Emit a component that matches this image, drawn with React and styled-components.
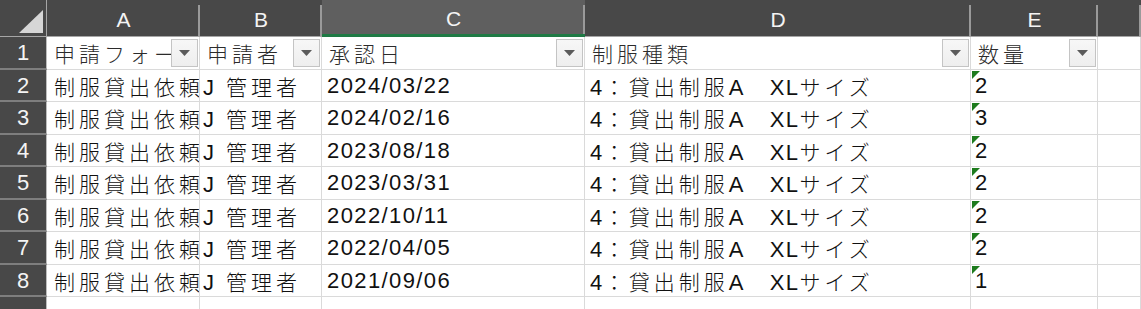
import React from 'react'
import styled, { createGlobalStyle } from 'styled-components'

const GlobalStyle = createGlobalStyle`
  body {
    margin: 0;
    background: #ffffff;
    font-family: "Liberation Sans", "Noto Sans CJK JP", sans-serif;
  }
`

const Sheet = styled.div`
  width: 1141px;
  height: 309px;
  overflow: hidden;
  display: grid;
  grid-template-columns: 47px 153px 122px 263px 386px 127px 1fr;
  grid-template-rows: 37px 33px 32px 33px 32px 33px 32px 33px 32px 40px;
  background: #ffffff;
`

const Corner = styled.div`
  background: #484848;
  border-right: 1px solid #a6a6a6;
  border-bottom: 1px solid #a6a6a6;
  display: flex;
  align-items: flex-end;
  justify-content: flex-end;
  padding: 0 3px 3px 0;
`

const ColHead = styled.div`
  background: ${p => (p.$selected ? '#5f5f5f' : '#484848')};
  border-bottom: ${p => (p.$selected ? '3px solid #1f7a45' : '1px solid #a6a6a6')};
  color: #f4f4f4;
  font-size: 21px;
  display: flex;
  align-items: center;
  justify-content: center;
  padding-top: 4px;
  background-image: linear-gradient(#9a9a9a, #9a9a9a);
  background-size: 2px calc(100% - 5px);
  background-position: right bottom;
  background-repeat: no-repeat;
`

const RowHead = styled.div`
  background: #484848;
  color: #f4f4f4;
  font-size: 22px;
  display: flex;
  align-items: center;
  justify-content: center;
  border-right: 1px solid #bdbdbd;
  border-bottom: 2px solid #7e7e7e;
  padding-top: 1px;
`

const Cell = styled.div`
  position: relative;
  display: flex;
  align-items: center;
  min-width: 0;
  overflow: hidden;
  white-space: pre;
  border-right: 1px solid #dadada;
  border-bottom: 1px solid #dadada;
  padding-left: ${p => p.$pad ?? 7}px;
  font-size: 22px;
  letter-spacing: 1.4px;
  color: ${p => (p.$head ? '#2b2b2b' : '#111111')};
`

const CellText = styled.span`
  flex: 1;
  min-width: 0;
  overflow: hidden;
`

const Jp = styled.span`
  font-family: "Noto Sans CJK JP", sans-serif;
  font-size: 21px;
  font-weight: 300;
  letter-spacing: 4px;
  margin-left: ${p => p.$lead ?? 0}px;
`

const FilterButton = styled.div`
  flex-shrink: 0;
  width: 27px;
  height: 28px;
  margin-right: 1px;
  box-sizing: border-box;
  border: 1px solid #c4c4c4;
  background: linear-gradient(#f7f7f7, #eeeeee);
  display: flex;
  align-items: center;
  justify-content: center;
`

const ErrorMark = styled.span`
  position: absolute;
  top: 1px;
  left: 1px;
  width: 0;
  height: 0;
  border-top: 8px solid #1d7b1d;
  border-right: 8px solid transparent;
`

const JP_RE = /([\u3000-\u30ff\u4e00-\u9fff\uff01-\uff60]+)/

const Text = ({ children }) => (
  <CellText>
    {children.split(JP_RE).filter(Boolean).map((s, i) =>
      JP_RE.test(s) ? <Jp key={i}>{s}</Jp> : <React.Fragment key={i}>{s}</React.Fragment>
    )}
  </CellText>
)

const Filter = () => (
  <FilterButton>
    <svg width="11" height="6" viewBox="0 0 11 6">
      <polygon points="0,0 11,0 5.5,6" fill="#5b5b5b" />
    </svg>
  </FilterButton>
)

const columns = ['A', 'B', 'C', 'D', 'E', '']
const headers = ['申請フォーム', '申請者', '承認日', '制服種類', '数量']

const rows = [
  ['2024/03/22', '2'],
  ['2024/02/16', '3'],
  ['2023/08/18', '2'],
  ['2023/03/31', '2'],
  ['2022/10/11', '2'],
  ['2022/04/05', '2'],
  ['2021/09/06', '1']
]

const App = () => (
  <>
    <GlobalStyle />
    <Sheet>
      <Corner>
        <svg width="24" height="23" viewBox="0 0 24 23">
          <polygon points="0,23 24,23 24,0" fill="#d6d6d6" />
        </svg>
      </Corner>
      {columns.map(c => (
        <ColHead key={c || 'F'} $selected={c === 'C'}>{c}</ColHead>
      ))}

      <RowHead>1</RowHead>
      {headers.map(h => (
        <Cell key={h} $head>
          <Text>{h}</Text>
          <Filter />
        </Cell>
      ))}
      <Cell />

      {rows.map(([date, qty], i) => (
        <React.Fragment key={i}>
          <RowHead>{i + 2}</RowHead>
          <Cell><Text>制服貸出依頼書</Text></Cell>
          <Cell $pad={3}>
            <CellText>J <Jp $lead={3}>管理者</Jp></CellText>
          </Cell>
          <Cell $pad={5}><Text>{date}</Text></Cell>
          <Cell $pad={5}><Text>4：貸出制服A　XLサイズ</Text></Cell>
          <Cell $pad={4}>
            <ErrorMark />
            <Text>{qty}</Text>
          </Cell>
          <Cell />
        </React.Fragment>
      ))}

      <RowHead>9</RowHead>
      <Cell />
      <Cell />
      <Cell />
      <Cell />
      <Cell />
      <Cell />
    </Sheet>
  </>
)

export default App
